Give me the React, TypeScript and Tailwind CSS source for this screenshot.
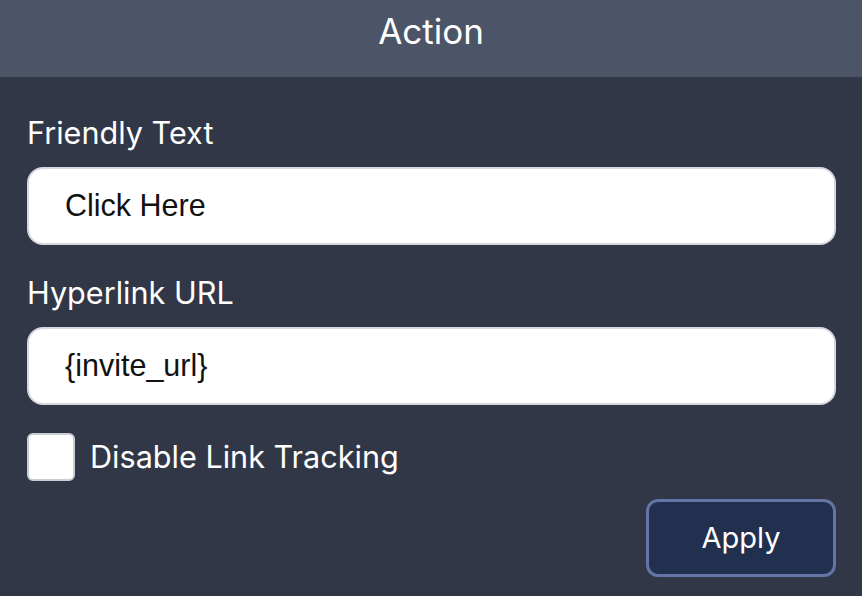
export default function App() {
  return (
    <div className="w-[862px] h-[596px] bg-[#313747] flex flex-col overflow-hidden" style={{ fontFamily: "Inter, 'Noto Sans', sans-serif" }}>
      <div className="h-[77px] bg-[#4c5467] flex items-center justify-center shrink-0">
        <span className="text-white text-[35px] leading-none pb-[14px]">Action</span>
      </div>
      <div className="flex flex-col px-[27px] pr-[26px] pt-[38px]">
        <label className="text-white text-[30.6px] leading-[35px]">Friendly Text</label>
        <div className="mt-[17px] h-[78px] bg-white rounded-[16px] border-2 border-[#d5d8de] flex items-center pl-[36px]">
          <span className="text-[#111] text-[30.5px]" style={{ fontFamily: "'Liberation Sans', Arial, sans-serif" }}>Click Here</span>
        </div>
        <label className="mt-[30px] text-white text-[30.6px] leading-[35px]">Hyperlink URL</label>
        <div className="mt-[17px] h-[78px] bg-white rounded-[16px] border-2 border-[#d5d8de] flex items-center pl-[36px]">
          <span className="text-[#111] text-[30.5px]" style={{ fontFamily: "'Liberation Sans', Arial, sans-serif" }}>{"{invite_url}"}</span>
        </div>
        <div className="mt-[28px] flex items-center gap-[15px]">
          <div className="w-[48px] h-[48px] bg-white rounded-[6px] border-2 border-[#c9ccd2]" />
          <span className="text-white text-[30.6px] leading-none">Disable Link Tracking</span>
        </div>
        <div className="mt-[18px] flex justify-end">
          <button className="w-[190px] h-[78px] bg-[#22304f] border-[3px] border-[#6475a5] rounded-[12px] text-white text-[29px] flex items-center justify-center">
            Apply
          </button>
        </div>
      </div>
    </div>
  );
}
